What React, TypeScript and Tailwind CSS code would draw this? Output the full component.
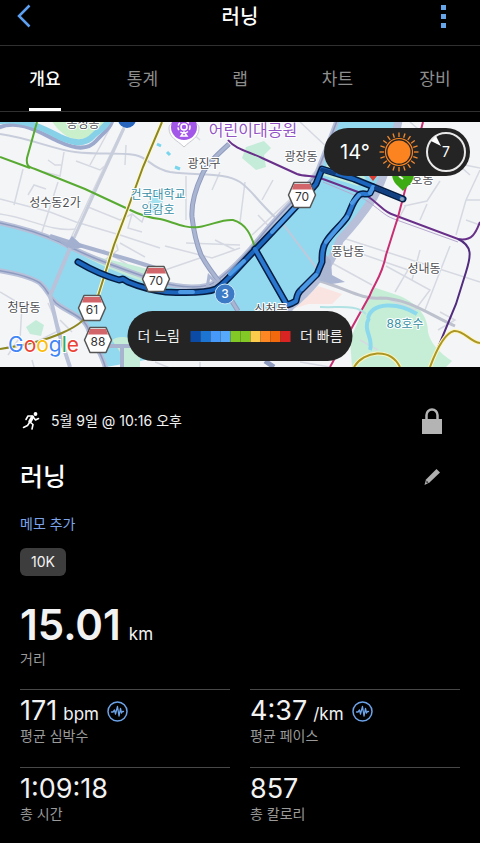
import React from "react";

const tabs = ["개요", "통계", "랩", "차트", "장비"];

const paceColors = [
  "bg-[#0b4aa5]",
  "bg-[#1c74d3]",
  "bg-[#4699f8]",
  "bg-[#57a9fb]",
  "bg-[#82c926]",
  "bg-[#82c926]",
  "bg-[#fccb4b]",
  "bg-[#fd8723]",
  "bg-[#f2690d]",
  "bg-[#da2323]",
];

function RoadSign({ x, y, label }: { x: number; y: number; label: string }) {
  return (
    <g transform={`translate(${x} ${y})`}>
      <path d="M-8 -12.500H8L13.500 0L8 12.500H-8L-13.500 0Z" fill="#fff" stroke="#555" strokeWidth="1.500" strokeLinejoin="round" />
      <path d="M-8 -11H8L10 -5.500H-10Z" fill="#d2656a" />
      <text y="6" textAnchor="middle" fontSize="12" fill="#333">
        {label}
      </text>
    </g>
  );
}

const shore =
  "M-5 222C20 227 40 233 60 242C90 258 125 270 160 282C180 288 205 289 215 282C235 268 250 250 262 235C280 213 300 195 316 175C322 160 330 140 338 118";
const eastShore = "M399 118C393 150 384 178 374 197C364 212 354 225 340 240C332 262 318 284 290 307C282 322 260 334 230 340";
const southShore = "M-5 270C15 273 32 278 40 283C48 290 48 296 56 303C68 313 84 315 89 331C95 346 103 355 106 370";
const trunk = "M229 144C217 155 206 165 202 175C196 188 191 202 192 217C194 234 197 245 201 255C206 264 212 273 222 285L238 311";

const route =
  "M78 262C90 269 105 276 119 280L123 279L128 282C140 287 150 290 166 292C185 293 206 293 216 289C226 283 240 265 256 249C275 229 302 201 316 184L322 169L354 179L403 199";
const loop =
  "M255 249L287 305C291 304 293 303 296 301C297 297 297 294 300 291L317 274L322 262C322 255 322 248 326 242C332 232 341 226 347 217C351 210 352 202 359 195C363 192 367 196 370 193L373 187";

function RouteMap() {
  return (
    <svg
      className="block h-full w-full"
      viewBox="0 122 480 245"
      preserveAspectRatio="xMidYMid slice"
      role="img"
      aria-label="러닝 경로 지도"
      fontFamily="Inter, 'Noto Sans CJK KR', sans-serif"
    >
      <rect y="122" width="480" height="245" fill="#f4f5f7" />

      {/* Parks */}
      <path d="M242 158L246 147L264 141L271 148L264 155L266 167L256 170Z" fill="#c5ecd8" />
      <path d="M373 287L400 296C420 305 428 318 428 332C430 343 440 353 452 361L446 367H352L350 340Z" fill="#c6eed7" />
      <path d="M26 327L36 320L44 325L41 336L30 334Z" fill="#c5ecd8" />
      <path d="M318 286L342 294L332 304H308L296 308Z" fill="#fae4e1" />

      {/* Streets */}
      <g fill="none" stroke="#d6d9e2" strokeWidth="1.500">
        <path d="M126 122L98 180L70 240M110 128L90 165M126 145L125 165M64 152L60 176L44 172M48 160L55 165L61 165M76 161L100 170L108 163" />
        <path d="M0 199L50 212L76 222L120 235L160 248M0 214C30 218 50 232 76 229M23 169L14 205M58 182L41 235M28 195L34 185L46 189M88 207L120 220L132 214L142 222L150 200M132 214L128 228L142 232" />
        <path d="M186 176V220M220 172L212 190M300 190L252 235M245 182L240 222M273 180L262 200M300 122L330 150M340 146L312 175M258 215L285 243" />
        <path d="M404 206L427 201L440 181M466 200L480 170M466 200L456 235M404 145L440 160L480 168M410 122L470 175M406 205L397 222M427 204L420 220M466 200H480M466 220L480 225" />
        <path d="M343 238L480 282M330 243L408 270L395 292M386 266L430 290L415 310L390 300M450 246L425 310M420 250L412 280M330 262L372 285M440 312L455 320L438 330" />
        <path d="M0 292L22 305L20 340M40 340L60 330L48 303M60 320L72 332M8 355L20 337M32 360L34 367M180 122L200 140M165 246L212 258L240 248M186 243L240 245M165 270L200 258M120 243L145 257M103 250L128 265M102 262L118 250L116 243M215 240L235 250" />
        <path d="M155 362L175 370M200 362V367M300 362L330 367M360 340L378 350" />
      </g>
      <g fill="none" stroke="#c8cddb" strokeWidth="2">
        <path d="M0 134C30 138 55 150 75 152C100 155 115 152 135 155C150 158 150 168 170 172C200 176 225 172 240 182C252 190 256 200 278 220L320 242" />
        <path d="M124 128L100 180L74 238" strokeWidth="3" />
        <path d="M320 281C345 288 362 300 380 298C408 298 430 315 455 326" stroke="#bcc1cd" strokeWidth="3" />
      </g>

      {/* Stream and the park in the north-west */}
      <path d="M50 118C60 135 72 142 86 138C99 131 106 128 112 118Z" fill="#c9f0cb" />
      <path d="M-2 128C20 118 42 134 60 142C77 150 89 149 96 141C104 132 110 129 113 119" fill="none" stroke="#9ca9cd" strokeWidth="4" />
      <path d="M-4 122C20 116 45 129 60 137C77 145 87 143 93 136C100 129 106 128 109 119" fill="none" stroke="#87d1e8" strokeWidth="6" />
      <path d="M152 192C164 190 165 205 160 215L148 211Z" fill="#a5e2f0" />
      <path d="M157 144L161 146M167 152L170 155M175 167L180 169" stroke="#79d5ec" strokeWidth="3" fill="none" />

      {/* River */}
      <path
        d="M0 223C20 227 40 233 60 242C90 258 125 270 160 282C180 288 205 289 215 282C235 268 250 250 262 235C280 213 300 195 316 175C322 160 330 140 338 122H398C393 150 384 178 374 195C362 212 352 225 340 240C332 262 318 280 288 309C282 322 260 334 230 345L106 367C103 355 95 346 89 331C84 315 68 313 56 303C48 296 48 290 40 283C32 278 15 273 0 270Z"
        fill="#92d9ef"
      />
      <path d="M68 247C98 259 125 262 162 273L164 288C135 280 94 264 68 247Z" fill="#c5ecd8" />
      <path d="M112 340C120 334 132 338 140 342V367H122L120 352Z" fill="#c5ecd8" />
      <path d="M322 175L332 153L350 165L366 178L358 186Z" fill="#c3ecd9" />
      <path d="M280 220L318 270" stroke="#c0c9db" strokeWidth="2" />
      <g fill="none" stroke="#b7c0d8" strokeWidth="5">
        <path d={shore} />
        <path d={eastShore} strokeWidth="8" />
        <path d={southShore} />
      </g>
      <g fill="none" stroke="#8e9bc0" strokeWidth="1.500">
        <path d={shore} />
        <path d={southShore} />
        <path d="M50 236L72 243L130 260L162 270" strokeWidth="4" stroke="#a8b3d0" />
      </g>
      <path d="M54 237L67 243L72 236L84 247L70 250Z" fill="#a3afcf" />
      <path d="M70 248L50 296L58 330L70 367" fill="none" stroke="#b9c2d8" strokeWidth="4" />
      <path d="M108 346H140M122 346V367" stroke="#a8b3cf" strokeWidth="4" />
      <path d="M321 250L331 260L332 275L345 282L332 284L318 280Z" fill="#abb6d3" />

      {/* Trunk roads */}
      <g fill="none" stroke="#8f9cc0" strokeWidth="5">
        <path d={trunk} />
        <path d={trunk} stroke="#aab5d2" strokeWidth="3" />
        <path d="M265 361L274 367" />
      </g>
      <path d="M209 276L218 284L207 288Z" fill="none" stroke="#aab5d2" strokeWidth="3" />

      {/* Subway lines */}
      <path d="M37 122L27 158C26 165 28 167 35 169L85 189L128 209C140 215 150 218 160 219C173 222 185 229 199 227C212 225 222 219 233 220C247 224 251 236 255 247" fill="none" stroke="#58aa32" strokeWidth="2" />
      <path d="M0 157L30 168" stroke="#58aa32" strokeWidth="2" />
      <path d="M162 122L143 167L128 208L114 245L98 296" fill="none" stroke="#fff9cf" strokeWidth="4" />
      <path d="M162 122L143 167L128 208L114 245L98 296C88 320 78 326 62 333C42 342 20 346 0 349" fill="none" stroke="#8d8721" strokeWidth="2" />
      <path d="M228 140C235 149 250 152 262 158L297 174C305 177 315 175 323 179L366 195C382 206 383 212 394 215L458 239C474 242 477 229 480 222" fill="none" stroke="#69308a" strokeWidth="2" />
      <path d="M323 182L364 199C380 209 383 215 394 219L458 242" fill="none" stroke="#b7a8cf" />
      <path d="M423 122L398 217L386 255C382 276 374 284 370 295L330 367" fill="none" stroke="#c82f72" strokeWidth="2" />
      <path d="M458 239C473 246 471 256 466 272L456 304L430 367" fill="none" stroke="#512c7e" strokeWidth="2" />
      <path d="M354 367C364 351 390 347 400 367M430 367C436 351 445 333 454 331C464 330 470 342 480 343" fill="none" stroke="#fff5bd" strokeWidth="4" />
      <path d="M354 367C364 351 390 347 400 367M430 367C436 351 445 333 454 331C464 330 470 342 480 343" fill="none" stroke="#aa9726" strokeWidth="2" />
      <path d="M368 318C372 302 398 302 417 314M369 318C362 330 374 338 370 350" fill="none" stroke="#8cd9ed" strokeWidth="4" />
      <path d="M320 307C340 308 356 304 366 314" fill="none" stroke="#b0e1e3" strokeWidth="2" />

      {/* Recorded track */}
      <g fill="none" strokeLinejoin="round" strokeLinecap="round">
        <path d={route} stroke="#061d42" strokeWidth="7" />
        <path d={loop} stroke="#061d42" strokeWidth="7" />
        <path d={route} stroke="#1b65bc" strokeWidth="4" />
        <path d={loop} stroke="#2a78d0" strokeWidth="4" />
        <path d="M180 292H193M230 274L244 261M272 232L302 200M326 242L347 217M352 203L359 195M370 193L373 187M302 289L316 275" stroke="#4c99e6" strokeWidth="4" />
        <path d="M376 188L398 197M322 170L334 173" stroke="#123f80" strokeWidth="4" />
      </g>
      <circle cx="402" cy="199" r="2" fill="#8fa3b5" />

      {/* Pins */}
      <path d="M369 176H377L373 181Z" fill="#dc3d32" />
      <circle cx="127" cy="119" r="9" fill="#2866bd" />
      <path d="M169 128C169 118 199 118 199 128C199 138 191 140 184 147C177 140 169 138 169 128Z" fill="#fff" stroke="#c9c9cf" />
      <circle cx="184" cy="127" r="13" fill="#a257e8" />
      <g fill="none" stroke="#fff" strokeWidth="1.500">
        <circle cx="184" cy="127" r="3" />
        <circle cx="184" cy="127" r="6" strokeDasharray="3 2" />
        <path d="M181 136L184 132L187 136Z" />
      </g>
      <circle cx="225" cy="294" r="10" fill="#3d7ac5" stroke="#c7e5fa" />
      <text x="225" y="298" textAnchor="middle" fontSize="12" fontWeight="500" fill="#fff">3</text>

      {/* Place names */}
      <g fontSize="12" fill="#4c4e52" stroke="#fff" strokeWidth="2" strokeLinejoin="round" paintOrder="stroke" textAnchor="middle">
        <text x="83" y="128">송정동</text>
        <text x="55" y="207">성수동2가</text>
        <text x="204" y="168">광진구</text>
        <text x="301" y="161">광장동</text>
        <text x="417" y="184">천호동</text>
        <text x="348" y="256">풍납동</text>
        <text x="424" y="273">성내동</text>
        <text x="24" y="312">청담동</text>
        <text x="271" y="314">신천동</text>
        <g fill="#3a8fa5">
          <text x="158" y="199">건국대학교</text>
          <text x="158" y="214">일감호</text>
          <text x="405" y="328">88호수</text>
        </g>
        <text x="253" y="136" fontSize="16" fill="#9254c4">어린이대공원</text>
      </g>
      <path d="M392 175H414C413 184 407 186 403 191C399 186 393 184 392 175Z" fill="#3cac12" />
      <path d="M399 176L403 179" stroke="#fff" strokeWidth="2" />

      <RoadSign x={302} y={195} label="70" />
      <RoadSign x={156} y={279} label="70" />
      <RoadSign x={92} y={308} label="61" />
      <RoadSign x={98} y={340} label="88" />

      <text x="8" y="352" fontSize="21" stroke="#fff" strokeWidth="2" paintOrder="stroke">
        <tspan fill="#4285f4">G</tspan>
        <tspan fill="#ea4335">o</tspan>
        <tspan fill="#fbbc05">o</tspan>
        <tspan fill="#4285f4">g</tspan>
        <tspan fill="#34a853">l</tspan>
        <tspan fill="#ea4335">e</tspan>
      </text>
    </svg>
  );
}

const rays = Array.from({ length: 20 }, (_, i) => i * 18);

function Sun() {
  return (
    <svg className="size-10" viewBox="-20 -20 40 40" aria-hidden="true">
      <circle r="11.500" fill="#fb8420" />
      <circle r="13.500" fill="none" stroke="#fb8420" strokeWidth="1.200" />
      {rays.map((angle) => (
        <path key={angle} d="M0 -15V-19.500" stroke="#f58a30" strokeWidth="1.300" transform={`rotate(${angle})`} />
      ))}
    </svg>
  );
}

function Weather() {
  return (
    <div className="absolute top-[6px] right-[10px] flex h-12 w-[146px] items-center justify-between rounded-full bg-[#242424] pr-1 pl-4">
      <span className="w-8 text-xl whitespace-nowrap text-white">14°</span>
      <Sun />
      <div className="relative flex size-10 items-center justify-center rounded-full border-2 border-[#e8e8e8] text-sm text-white">
        7
        <svg className="absolute top-[2px] left-[2px] size-3" viewBox="0 0 12 12" aria-hidden="true">
          <path d="M1 5L6 0L11 10Z" fill="#fff" />
        </svg>
      </div>
    </div>
  );
}

function PaceLegend() {
  return (
    <div className="absolute bottom-[6px] left-1/2 flex h-[50px] w-[225px] -translate-x-1/2 items-center justify-center gap-[10px] rounded-full bg-[#242424] text-sm whitespace-nowrap text-[#eeeeee]">
      <span>더 느림</span>
      <div className="flex h-[11px]">
        {paceColors.map((color, i) => (
          <span key={i} className={`w-[10px] ${color}`} />
        ))}
      </div>
      <span>더 빠름</span>
    </div>
  );
}

function Pulse() {
  return (
    <button type="button" aria-label="차트 보기" className="ml-2 self-center">
      <svg className="size-[21px]" viewBox="0 0 21 21" fill="none" stroke="#6da3e8" strokeLinejoin="round" strokeLinecap="round">
        <circle cx="10.500" cy="10.500" r="9.500" strokeWidth="1.500" />
        <path d="M4.500 11H6L7.500 9L8.500 13L10.500 5.500L12 15L13.500 7.500L14.500 12L15.500 10.500H16.500" strokeWidth="1.300" />
      </svg>
    </button>
  );
}

function Stat({ value, unit, label, chart }: { value: string; unit?: string; label: string; chart?: boolean }) {
  return (
    <div className="h-[78px] border-t border-[#484848] pt-[5px]">
      <dd className="flex h-8 items-baseline">
        <span className="text-[27px] leading-8">{value}</span>
        {unit && <span className="ml-[6px] text-[17px] leading-8">{unit}</span>}
        {chart && <Pulse />}
      </dd>
      <dt className="text-sm leading-[18px] text-[#9a9a9a]">{label}</dt>
    </div>
  );
}

export default function App() {
  return (
    <div className="min-h-screen bg-black font-[Inter,'Noto_Sans_CJK_KR',sans-serif] text-[#f2f2f2]">
      <header className="flex h-[46px] items-start justify-between border-b border-[#303030] px-4">
        <button type="button" aria-label="뒤로" className="flex h-8 w-10 items-center">
          <svg className="h-6 w-4" viewBox="0 0 16 24" fill="none" stroke="#5d9ff0" strokeWidth="2.500">
            <path d="M13.500 1.500L3 12L13.500 22.500" />
          </svg>
        </button>
        <h1 className="text-xl leading-[34px] font-medium text-white">러닝</h1>
        <button type="button" aria-label="더보기" className="flex h-[34px] w-10 items-center justify-center">
          <svg className="h-6 w-[6px]" viewBox="0 0 6 24" fill="#67a5e9">
            <path d="M0 0H5V5H0ZM0 9H5V14H0ZM0 18H5V23H0Z" />
          </svg>
        </button>
      </header>

      <nav className="flex h-[66px] justify-between border-b border-[#303030] px-[15px]" role="tablist">
        {tabs.map((tab, i) => (
          <button
            key={tab}
            type="button"
            role="tab"
            aria-selected={i === 0}
            className={`flex w-[60px] justify-center text-[17px] ${i === 0 ? "font-medium text-white" : "text-[#8e8e8e]"}`}
          >
            <span className={`h-[65px] border-b-3 leading-[66px] ${i === 0 ? "border-white" : "border-transparent"}`}>{tab}</span>
          </button>
        ))}
      </nav>

      <main>
        <section className="relative mt-[10px] h-[245px]">
          <RouteMap />
          <Weather />
          <PaceLegend />
        </section>

        <section className="px-5 pt-10">
          <div className="flex h-7 items-center justify-between">
            <div className="flex items-center gap-[11px]">
              <svg className="h-5 w-5" viewBox="0 0 20 20" fill="none" stroke="#fff" strokeLinecap="round" strokeLinejoin="round" aria-hidden="true">
                <circle cx="15.500" cy="3" r="1.900" fill="#fff" stroke="none" />
                <path d="M12.500 6L10 10.500" strokeWidth="3.500" />
                <path d="M12 5L8 5L6 8.500M14 7L15.500 9L18.500 7.500M10 11L13 13.500L12 18M9.500 11.500L7.500 14.500L3.500 16.500" strokeWidth="1.600" />
              </svg>
              <time className="text-sm">5월 9일 @ 10:16 오후</time>
            </div>
            <svg className="mr-[18px] h-[26px] w-5" viewBox="0 0 20 26" role="img" aria-label="비공개">
              <rect y="11" width="20" height="15" fill="#b4b4b4" />
              <path d="M4.500 12V7A5.500 5.500 0 0 1 15.500 7V12" fill="none" stroke="#b4b4b4" strokeWidth="2.500" />
            </svg>
          </div>

          <div className="mt-[22px] flex h-10 items-center justify-between">
            <h2 className="text-[25px] leading-10 font-medium text-white">러닝</h2>
            <button type="button" aria-label="이름 편집" className="mr-[19px]">
              <svg className="size-[18px]" viewBox="0 0 18 18">
                <path d="M13.500 1L17 4.500L6.500 14.500L1.500 17L3 11.500Z" fill="#b0b0b0" />
                <path d="M3.500 12.500L5.500 14.500L3.500 15Z" fill="#222" />
              </svg>
            </button>
          </div>

          <button type="button" className="mt-[17px] block text-sm leading-5 text-[#7ba4ea]">메모 추가</button>
          <button type="button" className="mt-[14px] block h-7 rounded-md bg-[#3d3d3d] px-[11px] text-sm">10K</button>

          <dl>
            <div className="mt-[26px] h-[87px]">
              <dd className="flex items-baseline">
                <span className="text-[42px] leading-[46px] font-semibold">15.01</span>
                <span className="ml-2 text-[17px]">km</span>
              </dd>
              <dt className="mt-[2px] text-sm leading-[18px] text-[#9a9a9a]">거리</dt>
            </div>
            <div className="grid grid-cols-2 gap-x-5">
              <Stat value="171" unit="bpm" label="평균 심박수" chart />
              <Stat value="4:37" unit="/km" label="평균 페이스" chart />
              <Stat value="1:09:18" label="총 시간" />
              <Stat value="857" label="총 칼로리" />
            </div>
          </dl>
        </section>
      </main>
    </div>
  );
}
